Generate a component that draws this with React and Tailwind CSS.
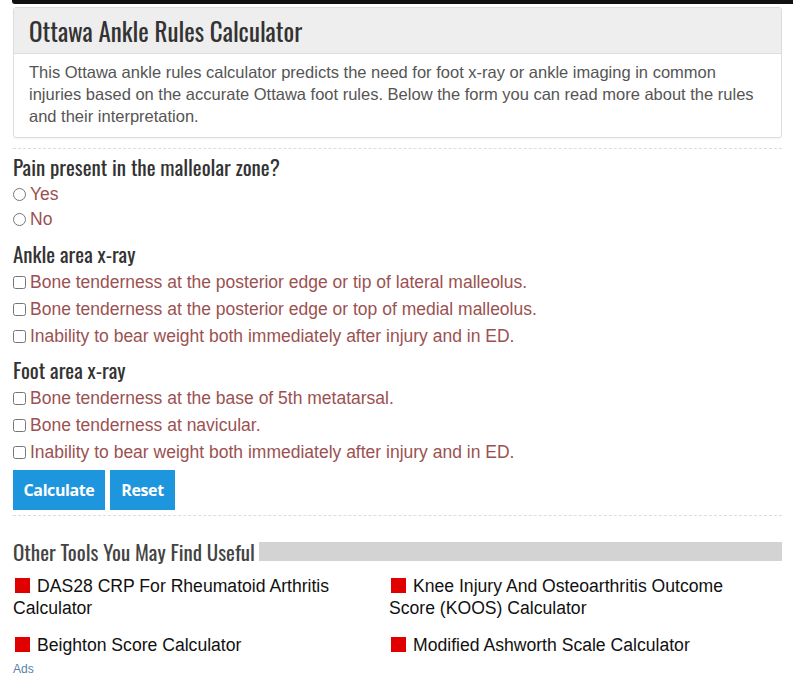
import React, { useState } from 'react';

const heading = "font-['Oswald','Liberation_Sans_Narrow','DejaVu_Sans_Condensed',sans-serif]";
const body = "font-['Liberation_Sans',Arial,sans-serif]";

const ankleItems = [
  'Bone tenderness at the posterior edge or tip of lateral malleolus.',
  'Bone tenderness at the posterior edge or top of medial malleolus.',
  'Inability to bear weight both immediately after injury and in ED.',
];

const footItems = [
  'Bone tenderness at the base of 5th metatarsal.',
  'Bone tenderness at navicular.',
  'Inability to bear weight both immediately after injury and in ED.',
];

const tools = [
  ['DAS28 CRP For Rheumatoid Arthritis Calculator', 'Knee Injury And Osteoarthritis Outcome Score (KOOS) Calculator'],
  ['Beighton Score Calculator', 'Modified Ashworth Scale Calculator'],
];

const CheckRow = ({ label, checked, onChange }) => (
  <label className="flex items-center h-[27px] cursor-pointer">
    <input type="checkbox" checked={checked} onChange={onChange} className="w-[13px] h-[13px] m-0 mr-[4px]" />
    <span className="text-[17.5px] text-[#9b5151]">{label}</span>
  </label>
);

const App = () => {
  const [pain, setPain] = useState('');
  const [checks, setChecks] = useState({});

  const toggle = key => setChecks({ ...checks, [key]: !checks[key] });

  const reset = () => {
    setPain('');
    setChecks({});
  };

  return (
    <div className={`${body} bg-white min-h-[676px] overflow-hidden`}>
      <div className="h-[4px] ml-[12px] bg-[#111] rounded-bl-[3px]" />

      <div className="ml-[13px] w-[769px]">
        {/* intro card */}
        <div className="mt-[3px] border border-[#ddd] rounded-[3px] shadow-[0_1px_1px_rgba(0,0,0,0.05)]">
          <div className="h-[46px] bg-[#eee] border-b border-[#ddd] pl-[15px] flex items-center">
            <h1 className={`${heading} text-[25px] text-[#333] leading-none`}>Ottawa Ankle Rules Calculator</h1>
          </div>
          <p className="px-[15px] pt-[7px] pb-[10px] text-[16.5px] leading-[22px] text-[#555]">
            This Ottawa ankle rules calculator predicts the need for foot x-ray or ankle imaging in common injuries based on the accurate Ottawa foot rules. Below the form you can read more about the rules and their interpretation.
          </p>
        </div>

        <div className="mt-[10px] border-t border-dashed border-[#ddd]" />

        <h2 className={`${heading} text-[21px] text-[#333] h-[30px] leading-[30px] mt-[3px]`}>Pain present in the malleolar zone?</h2>
        {['Yes', 'No'].map(v => (
          <label key={v} className="flex items-center h-[25px] cursor-pointer">
            <input type="radio" name="pain" checked={pain === v} onChange={() => setPain(v)} className="w-[13px] h-[13px] m-0 mr-[4px]" />
            <span className="text-[17.5px] text-[#9b5151]">{v}</span>
          </label>
        ))}

        <h2 className={`${heading} text-[21px] text-[#333] h-[30px] leading-[30px] mt-[7px]`}>Ankle area x-ray</h2>
        {ankleItems.map((t, i) => (
          <CheckRow key={t} label={t} checked={!!checks['a' + i]} onChange={() => toggle('a' + i)} />
        ))}

        <h2 className={`${heading} text-[21px] text-[#333] h-[30px] leading-[30px] mt-[5px]`}>Foot area x-ray</h2>
        {footItems.map((t, i) => (
          <CheckRow key={t} label={t} checked={!!checks['f' + i]} onChange={() => toggle('f' + i)} />
        ))}

        <div className="flex gap-[5px] mt-[4px]">
          <button className="h-[40px] w-[92px] bg-[#1e96dd] text-white font-['Open_Sans',sans-serif] font-bold text-[16px] tracking-tight">Calculate</button>
          <button onClick={reset} className="h-[40px] w-[65px] bg-[#1e96dd] text-white font-['Open_Sans',sans-serif] font-bold text-[16px] tracking-tight">Reset</button>
        </div>

        <div className="mt-[5px] border-t border-dashed border-[#ddd]" />

        {/* other tools */}
        <div className="flex items-center mt-[23px] h-[24px]">
          <h3 className={`${heading} text-[21px] text-[#444] leading-none shrink-0 mr-[4px]`}>Other Tools You May Find Useful</h3>
          <div className="flex-1 h-[19px] bg-[#d3d3d3]" />
        </div>

        <div className="grid grid-cols-[376px_1fr] gap-y-[15px] mt-[12px] text-[17.6px] leading-[22px] text-[#111]">
          {tools.flat().map(t => (
            <a key={t} href="#" className="pr-[40px]">
              <span className="inline-block w-[15px] h-[15px] bg-[#e10000] ml-[2px] mr-[7px] align-[-1px]" />
              {t}
            </a>
          ))}
        </div>

        <div className="mt-[6px] text-[12px] text-[#5a7fa8] leading-[14px]">Ads</div>
      </div>
    </div>
  );
};

export default App;
